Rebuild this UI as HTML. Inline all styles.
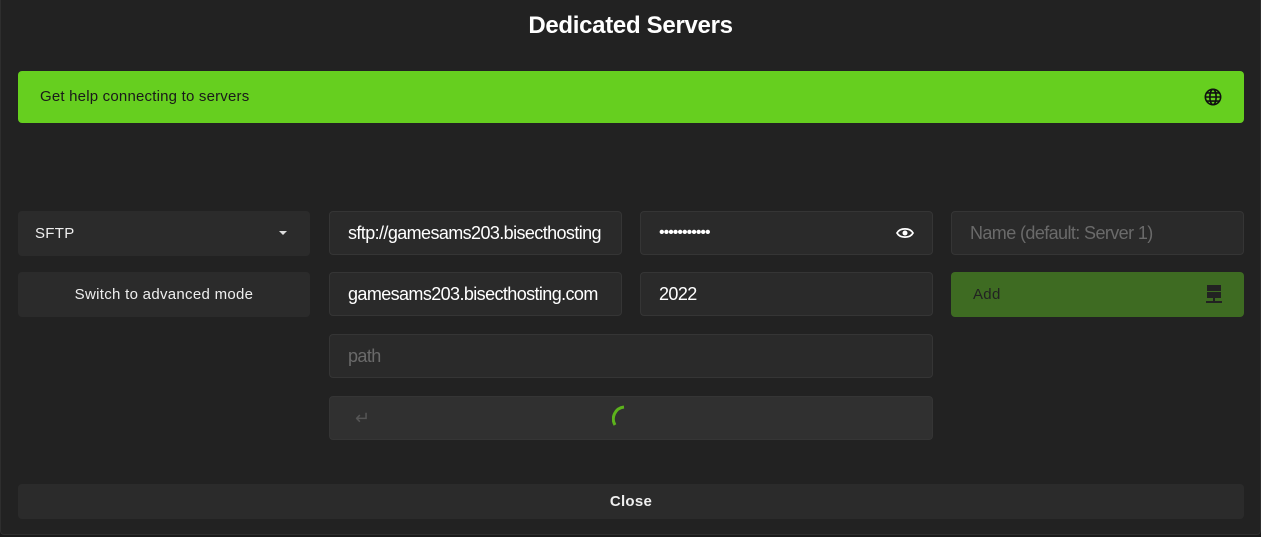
<!DOCTYPE html>
<html><head><style>
body{margin:0;width:1261px;height:537px;background:#1a1a1a;font-family:"Liberation Sans",sans-serif;overflow:hidden;position:relative}
.dlg{position:absolute;left:0;top:0;width:1261px;height:535px;box-sizing:border-box;background:#222;border:1px solid #2e2e2e;border-top:none;border-radius:0 0 4px 4px}
h1{position:absolute;top:12px;left:0;width:100%;text-align:center;margin:0;color:#fff;font-size:24px;font-weight:bold;letter-spacing:-0.3px}
.help{position:absolute;left:17px;top:71px;width:1226px;height:52px;background:#66cf1f;border-radius:4px;color:#1a1a1a;font-size:15px;line-height:52px;box-sizing:border-box;padding-left:22px;letter-spacing:0.2px}
.f{position:absolute;height:44px;border-radius:4px;background:#2a2a2a;border:1px solid #353535;box-sizing:border-box;color:#fff;font-size:18px;line-height:42px;padding-left:18px;white-space:nowrap;overflow:hidden;letter-spacing:-0.6px}
.b{position:absolute;height:45px;border-radius:4px;background:#2b2b2b;color:#eee;font-size:15px;line-height:45px;box-sizing:border-box;letter-spacing:0.3px}
.ph{color:#6a6a6a}
</style></head><body>
<div class="dlg">
<h1>Dedicated Servers</h1>
<div class="help">Get help connecting to servers
<svg style="position:absolute;right:22px;top:17px" width="18" height="18" viewBox="0 0 20 20" fill="none" stroke="#111" stroke-width="1.8"><circle cx="10" cy="10" r="8.5"/><ellipse cx="10" cy="10" rx="3.5" ry="8.5"/><path d="M1.5 10h17M3 5.5h14M3 14.5h14"/></svg></div>
<div class="b" style="left:17px;top:211px;width:292px;padding-left:17px">SFTP<span style="position:absolute;right:23px;top:20px;border:4px solid transparent;border-top:4px solid #ddd;border-bottom:none"></span></div>
<div class="b" style="left:17px;top:272px;width:292px;text-align:center">Switch to advanced mode</div>
<div class="f" style="left:328px;top:211px;width:293px">sftp://gamesams203.bisecthosting</div>
<div class="f" style="left:328px;top:272px;width:293px">gamesams203.bisecthosting.com</div>
<div class="f ph" style="left:328px;top:334px;width:604px">path</div>
<div class="f" style="left:328px;top:396px;width:604px;background:#303030;color:#555;padding-left:25px">↵
<svg style="position:absolute;left:282px;top:6px" width="20" height="24" viewBox="0 0 20 24"><path d="M3 22 A12 12 0 0 1 12 4" stroke="#5cb21c" stroke-width="3" fill="none"/></svg></div>
<div class="f" style="left:639px;top:211px;width:293px;font-size:16px;letter-spacing:-1px">•••••••••••
<svg style="position:absolute;right:18px;top:14px" width="18" height="14" viewBox="0 0 18 14"><path d="M1 7C4 1.5 14 1.5 17 7 14 12.5 4 12.5 1 7Z" fill="none" stroke="#fff" stroke-width="1.8"/><circle cx="9" cy="7" r="2.5" fill="#fff"/></svg></div>
<div class="f" style="left:639px;top:272px;width:293px">2022</div>
<div class="f ph" style="left:950px;top:211px;width:293px">Name (default: Server 1)</div>
<div class="b" style="left:950px;top:272px;width:293px;background:#3e6b22;color:#222;padding-left:22px">Add
<svg style="position:absolute;right:22px;top:13px" width="16" height="20" viewBox="0 0 16 20" fill="#222"><rect x="1" y="0" width="14" height="6"/><rect x="1" y="7" width="14" height="6"/><rect x="7" y="13" width="2" height="4"/><rect x="0" y="16" width="16" height="2"/></svg></div>
<div class="b" style="left:17px;top:484px;width:1226px;height:35px;line-height:35px;text-align:center;font-weight:bold">Close</div>
</div>
</body></html>
